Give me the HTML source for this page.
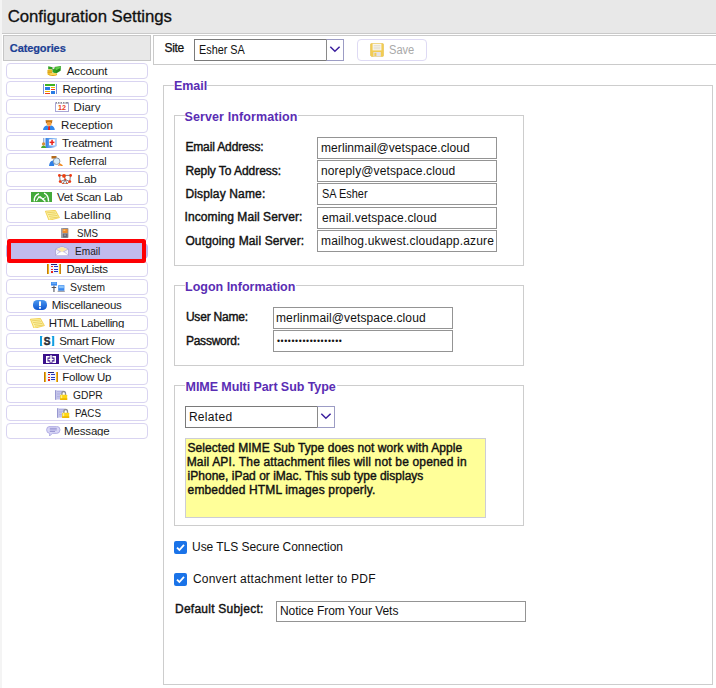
<!DOCTYPE html>
<html><head><meta charset="utf-8"><title>Configuration Settings</title>
<style>
*{box-sizing:border-box;margin:0;padding:0}
html,body{width:716px;height:688px;overflow:hidden;background:#fff;font-family:"Liberation Sans",sans-serif;color:#111}
body{position:relative}
.a{position:absolute}
.t{position:absolute;white-space:nowrap}
#hdr{left:2px;top:0;width:714px;height:34px;background:#e8e8e8;border-bottom:1px solid #c9c9c9}
#strip{left:0;top:0;width:2px;height:688px;background:#f4f4f4}
#cat{left:3px;top:35px;width:148px;height:26px;background:#e8e8e8;border:1px solid #c6c6c6}
.btn{position:absolute;left:6px;width:142px;height:16px;border:1px solid #d9d4f1;border-radius:4px;background:#fff}
.btn.sel{background:#c1baec;border-color:#bdb8ea}
.clip{position:absolute;left:0;top:0;width:140px;height:12px;overflow:hidden}
.clip svg{position:absolute;display:block}
.bt{position:absolute;white-space:nowrap;font-size:11.5px;line-height:14px;color:#1c1c1c}
#red{left:7px;top:239px;width:139px;height:24px;border:4px solid #fd0004;border-radius:2.5px}
.inp{position:absolute;border:1px solid #949494;background:#fff;overflow:hidden}
.fs{position:absolute;border:1px solid #cdcdcd}
.lgbg{position:absolute;background:#fff;height:3px}
.cb{position:absolute;width:13px;height:13px;background:#1a73e8;border-radius:2px}
.cb svg{position:absolute;left:0;top:0}
</style></head><body>
<div id="strip" class="a"></div>
<div id="hdr" class="a"></div>
<div id="cat" class="a"></div>
<div class="a" style="left:153px;top:35px;width:570px;height:30px;border:1px solid #cacaca;background:#fff"></div>
<div id="title" class="t" style="left:7.70px;top:7.48px;font-size:16.8px;line-height:20px;font-weight:normal;color:#111;letter-spacing:-0.043px;-webkit-text-stroke:0.3px #111;">Configuration Settings</div>
<div id="cat_t" class="t" style="left:9.80px;top:42.49px;font-size:11px;line-height:13px;font-weight:bold;color:#1c3f94;letter-spacing:-0.100px;-webkit-text-stroke:0.2px #1c3f94;">Categories</div>
<div class="btn" style="top:63px"><div class="clip"><svg style="left:40.0px;top:2.0px" width="14" height="10" viewBox="0 0 14 10"><path d="M1.2 0.3 L5.6 1.2 L13.9 0 L13.6 4.8 L9.2 7.4 L5.4 6.2 L5.4 3.4 L1.2 3.2Z" fill="#2fa022"/><path d="M8 1.6 L13.2 0.8 L13 2.2 L9 4.2Z" fill="#5fcc46"/><path d="M8.8 5.2 L13.4 2.8 M9 6.4 L13.4 3.9" stroke="#1a741a" stroke-width="0.6"/><path d="M5.4 1.2 L7.8 0.9 L7.2 3 L5.6 3.2Z" fill="#f2dcee"/><rect x="0.5" y="3.4" width="4.7" height="5.6" rx="1" fill="#f2c230"/><path d="M0.5 5 H5.2 M0.5 6.6 H5.2" stroke="#c48c0c" stroke-width="0.6"/><ellipse cx="5.8" cy="8.6" rx="4.4" ry="1.4" fill="#e0a40e"/><ellipse cx="6" cy="8" rx="3.7" ry="1" fill="#fad85a"/></svg><span id="b0" class="bt" style="left:59.80px;top:-0.4px;letter-spacing:-0.150px">Account</span></div></div>
<div class="btn" style="top:81px"><div class="clip"><svg style="left:36.0px;top:2.0px" shape-rendering="crispEdges" width="15" height="10" viewBox="0 0 15 10"><rect x="0.2" y="0" width="0.9" height="10" fill="#7a8fd8"/><rect x="13.4" y="0" width="0.9" height="10" fill="#7a8fd8"/><rect x="2" y="0" width="10.2" height="1.7" fill="#3fb224"/><rect x="2" y="3.2" width="4.8" height="3.2" fill="#2a7be4"/><rect x="8" y="3" width="4.2" height="1" fill="#f4b800"/><rect x="8" y="5" width="4.2" height="1.1" fill="#ee3a1e"/><rect x="2" y="7.2" width="4.8" height="1" fill="#f4b800"/><rect x="2" y="9" width="4.8" height="1" fill="#ee3a1e"/><rect x="8" y="7.2" width="4.2" height="2.8" fill="#2a7be4"/></svg><span id="b1" class="bt" style="left:55.40px;top:-0.4px;letter-spacing:0.000px">Reporting</span></div></div>
<div class="btn" style="top:99px"><div class="clip"><svg style="left:48.0px;top:2.0px" width="14" height="10" viewBox="0 0 14 10"><rect x="0.5" y="0.8" width="13" height="8.7" fill="#fff" stroke="#a9a6d6" stroke-width="1"/><rect x="1" y="0" width="12" height="1.6" fill="#8c8c98"/><rect x="2" y="0" width="1" height="1.6" fill="#fff"/><rect x="4.5" y="0" width="1" height="1.6" fill="#fff"/><rect x="7" y="0" width="1" height="1.6" fill="#fff"/><rect x="9.5" y="0" width="1" height="1.6" fill="#fff"/><text x="7" y="8.2" font-family="Liberation Sans, sans-serif" font-size="7.5" font-weight="bold" fill="#e8401c" text-anchor="middle" textLength="8" lengthAdjust="spacingAndGlyphs">12</text></svg><span id="b2" class="bt" style="left:66.60px;top:-0.4px;letter-spacing:0.000px">Diary</span></div></div>
<div class="btn" style="top:117px"><div class="clip"><svg style="left:36.0px;top:2.0px" width="14" height="10" viewBox="0 0 14 10"><path d="M2.6 0 H9.4 L9 3.2 H3Z" fill="#b86a18"/><path d="M3 0 H9 V1.2 H3Z" fill="#d8902c"/><rect x="3.8" y="2" width="4.6" height="3.8" rx="1.2" fill="#f2a040"/><path d="M0 10 Q0.4 6 3.8 5.4 L6 7 L8.2 5.4 Q11.4 6 11.8 10Z" fill="#2f86ec"/><path d="M5.4 6 H6.8 L7.2 10 H5Z" fill="#e8201c"/></svg><span id="b3" class="bt" style="left:54.10px;top:-0.4px;letter-spacing:0.000px">Reception</span></div></div>
<div class="btn" style="top:135px"><div class="clip"><svg style="left:34.0px;top:2.0px" width="16" height="10" viewBox="0 0 16 10"><defs><linearGradient id="tg" x1="0" x2="1"><stop offset="0" stop-color="#2f7fe6"/><stop offset="1" stop-color="#b8d6fa"/></linearGradient></defs><rect x="2" y="0" width="1.4" height="6" fill="#9ab0d8"/><path d="M4.5 0 H16 V8 Q13 10 10 10 H4.5Z" fill="url(#tg)"/><rect x="8" y="1.2" width="6" height="6.4" rx="0.8" fill="#fff"/><rect x="10.3" y="1.8" width="1.5" height="5.2" fill="#e8241c"/><rect x="8.6" y="3.6" width="4.8" height="1.5" fill="#e8241c"/><circle cx="2.6" cy="6" r="1.7" fill="#d89038"/><path d="M0 10 Q0.3 7.4 2.6 7.4 Q5 7.4 5.3 10Z" fill="#48a82c"/></svg><span id="b4" class="bt" style="left:55.00px;top:-0.4px;letter-spacing:-0.225px">Treatment</span></div></div>
<div class="btn" style="top:153px"><div class="clip"><svg style="left:42.2px;top:2.0px" width="14" height="10" viewBox="0 0 14 10"><path d="M2.5 0 H7.5 V2.6 H2.5Z" fill="#b5691c"/><path d="M0 10 Q0.5 5 4 4.6 L6 4.6 L5 10Z" fill="#2f7fe6"/><circle cx="7.6" cy="5.2" r="3.3" fill="#d8ecfa" stroke="#8a98a8" stroke-width="1"/><path d="M10 7.6 L13.4 10" stroke="#f08a1c" stroke-width="1.6"/><path d="M9.4 9.2 L12 10 H9Z" fill="#e03a1c"/></svg><span id="b5" class="bt" style="left:62.10px;top:-0.4px;letter-spacing:0.000px;transform:scaleX(0.9216);transform-origin:0 50%">Referral</span></div></div>
<div class="btn" style="top:171px"><div class="clip"><svg style="left:51.4px;top:1.6px" width="14" height="11" viewBox="0 0 14 11"><path d="M1.4 1.4 H12.6 M1.6 1.4 L2.2 7.6 M12.4 1.4 L11.8 7.6 M2.2 7.6 L5 9.8 H9 L11.8 7.6 M6 1.6 L7.2 5.6 M7.2 5.6 L5 9.8 M7.2 5.6 L9 9.8 M2.2 7.6 L7.2 5.6 L11.8 7.6" stroke="#7c7c86" stroke-width="1" fill="none"/><circle cx="1.4" cy="1.5" r="1.4" fill="#ee3a14"/><circle cx="12.6" cy="1.5" r="1.4" fill="#ee3a14"/><circle cx="6" cy="1.9" r="1.9" fill="#f0400f"/><circle cx="2.2" cy="7.6" r="1.4" fill="#ee3a14"/><circle cx="11.8" cy="7.6" r="1.4" fill="#ee3a14"/><circle cx="7.3" cy="5.6" r="1" fill="#ee3a14"/><circle cx="5" cy="9.7" r="1" fill="#ee5a2a"/><circle cx="9" cy="9.7" r="1" fill="#ee5a2a"/></svg><span id="b6" class="bt" style="left:70.50px;top:-0.4px;letter-spacing:0.000px">Lab</span></div></div>
<div class="btn" style="top:189px"><div class="clip"><svg style="left:24.2px;top:2.0px" width="21" height="10" viewBox="0 0 21 10"><rect width="21" height="10" fill="#44aa3a"/><path d="M3.4 9.4 Q2.6 3.6 8 1.6" stroke="#fff" stroke-width="1.3" fill="none"/><path d="M5.4 9 L8 4.6 L9.6 6.4" stroke="#fff" stroke-width="1.1" fill="none"/><path d="M8.8 4.4 L14.4 9.6" stroke="#fff" stroke-width="1.4" fill="none"/><path d="M13 1.2 Q17.4 2.6 17.6 9.4" stroke="#fff" stroke-width="1.4" fill="none"/><path d="M11 6.8 Q13.6 7 14.8 4.6" stroke="#fff" stroke-width="1" fill="none"/></svg><span id="b7" class="bt" style="left:49.90px;top:-0.4px;letter-spacing:-0.245px">Vet Scan Lab</span></div></div>
<div class="btn" style="top:207px"><div class="clip"><svg style="left:37.5px;top:1.6px" width="15" height="11" viewBox="0 0 15 11"><path d="M0.4 1.2 L10.4 0.4 L14.4 7.6 L4 10.4Z" fill="#fcf2a4" stroke="#f0c83c" stroke-width="0.8"/><path d="M2 2.8 L10.4 2 M3 4.6 L11.4 3.7 M4 6.4 L12.4 5.4 M5 8.2 L13 7.1" stroke="#e4c44c" stroke-width="0.7" fill="none"/></svg><span id="b8" class="bt" style="left:57.00px;top:-0.4px;letter-spacing:0.112px">Labelling</span></div></div>
<div class="btn" style="top:225px"><div class="clip"><svg style="left:53.6px;top:2.3px" width="8" height="10" viewBox="0 0 8 10"><rect x="0" y="0" width="7.4" height="10" rx="0.8" fill="#8e8e96"/><rect x="0.6" y="0.4" width="1" height="9.2" fill="#b8b8c2"/><rect x="1.6" y="1" width="5" height="4" fill="#f08c2a"/><rect x="2.4" y="1.6" width="2" height="1.4" fill="#f8c070"/><rect x="1.8" y="6" width="4.6" height="3.2" fill="#6a6a74"/><rect x="3" y="6.6" width="2" height="1" fill="#a8a8b2"/></svg><span id="b9" class="bt" style="left:69.90px;top:-0.4px;letter-spacing:0.000px;transform:scaleX(0.8443);transform-origin:0 50%">SMS</span></div></div>
<div class="btn sel" style="top:243px"><div class="clip"><svg style="left:48.2px;top:2.3px" width="14" height="10" viewBox="0 0 14 10"><path d="M0.5 3 L7 0.3 L13.5 3 V9.6 H0.5Z" fill="#f4f2fc" stroke="#a8a2d4" stroke-width="0.8"/><path d="M1.2 3.2 L7 1 L12.8 3.2 L7 6.2Z" fill="#fbe9a6"/><path d="M0.5 3 L7 6.6 L13.5 3 M0.5 9.6 L5 5.6 M13.5 9.6 L9 5.6" stroke="#b4aedc" stroke-width="0.8" fill="none"/><path d="M0.9 9.3 L7 5.4 L13.1 9.3Z" fill="#fff"/></svg><span id="b10" class="bt" style="left:67.60px;top:-0.4px;letter-spacing:0.000px;transform:scaleX(0.8801);transform-origin:0 50%">Email</span></div></div>
<div class="btn" style="top:261px"><div class="clip"><svg style="left:39.5px;top:2.3px" shape-rendering="crispEdges" width="15" height="10" viewBox="0 0 15 10"><defs><linearGradient id="dg1" x1="0" x2="1"><stop offset="0" stop-color="#a85a00"/><stop offset="1" stop-color="#ffc81e"/></linearGradient><linearGradient id="dg2" x1="0" x2="1"><stop offset="0" stop-color="#ffc81e"/><stop offset="1" stop-color="#a85a00"/></linearGradient></defs><rect x="1.8" y="0" width="10.6" height="10" fill="#f0f5ff"/><rect x="0" y="0" width="1.8" height="10" fill="url(#dg1)"/><rect x="12.4" y="0" width="1.8" height="10" fill="url(#dg2)"/><rect x="4.4" y="0" width="6" height="0.9" fill="#20287c"/><rect x="4.4" y="2" width="1.7" height="1.4" fill="#e8241c"/><rect x="4.4" y="4.6" width="1.7" height="1.4" fill="#e8241c"/><rect x="4.4" y="7.2" width="1.7" height="1.4" fill="#e8241c"/><rect x="7.2" y="2.1" width="4" height="1.1" fill="#2438c0"/><rect x="7.2" y="4.7" width="4" height="1.1" fill="#2438c0"/><rect x="7.2" y="7.3" width="4" height="1.1" fill="#2438c0"/></svg><span id="b11" class="bt" style="left:59.50px;top:-0.4px;letter-spacing:-0.386px">DayLists</span></div></div>
<div class="btn" style="top:279px"><div class="clip"><svg style="left:43.6px;top:1.8px" width="14" height="10" viewBox="0 0 14 10"><rect x="0" y="0" width="6" height="3.6" fill="#3a8af0"/><rect x="0.6" y="0.5" width="4.8" height="1.2" fill="#7cb8f8"/><rect x="2.4" y="3.6" width="1.1" height="6.4" fill="#54545e"/><rect x="0.6" y="5" width="4.6" height="1" fill="#54545e"/><rect x="7.2" y="3.2" width="6.2" height="5.6" fill="#3a8af0"/><rect x="7.8" y="3.8" width="5" height="2.4" fill="#8cc4fa"/><rect x="6.6" y="8.8" width="7.2" height="1.1" fill="#9a9aa4"/></svg><span id="b12" class="bt" style="left:63.00px;top:-0.4px;letter-spacing:0.000px;transform:scaleX(0.9156);transform-origin:0 50%">System</span></div></div>
<div class="btn" style="top:297px"><div class="clip"><svg style="left:25.9px;top:1.8px" width="14" height="10" viewBox="0 0 14 10"><defs><linearGradient id="mg" x1="0" y1="0" x2="0" y2="1"><stop offset="0" stop-color="#4a98f0"/><stop offset="1" stop-color="#0f56d0"/></linearGradient></defs><rect x="0" y="0" width="14" height="10" rx="4.6" fill="url(#mg)"/><rect x="6" y="1.3" width="2" height="4.6" rx="0.5" fill="#fff"/><rect x="6" y="6.8" width="2" height="1.9" rx="0.5" fill="#fff"/></svg><span id="b13" class="bt" style="left:44.70px;top:-0.4px;letter-spacing:-0.225px">Miscellaneous</span></div></div>
<div class="btn" style="top:315px"><div class="clip"><svg style="left:22.6px;top:1.6px" width="15" height="11" viewBox="0 0 15 11"><path d="M0.4 1.2 L10.4 0.4 L14.4 7.6 L4 10.4Z" fill="#fcf2a4" stroke="#f0c83c" stroke-width="0.8"/><path d="M2 2.8 L10.4 2 M3 4.6 L11.4 3.7 M4 6.4 L12.4 5.4 M5 8.2 L13 7.1" stroke="#e4c44c" stroke-width="0.7" fill="none"/></svg><span id="b14" class="bt" style="left:41.70px;top:-0.4px;letter-spacing:-0.346px">HTML Labelling</span></div></div>
<div class="btn" style="top:333px"><div class="clip"><svg style="left:33.0px;top:2.3px" width="15" height="10" viewBox="0 0 15 10"><path d="M0 0 H2.4 V0.7 H2 V9.3 H2.4 V10 H0Z" fill="#129ee2"/><path d="M14.2 0 H11.8 V0.7 H12.2 V9.3 H11.8 V10 H14.2Z" fill="#129ee2"/><text x="7.1" y="8.6" font-family="Liberation Sans, sans-serif" font-size="10" font-weight="bold" fill="#2e2e36" stroke="#2e2e36" stroke-width="0.5" text-anchor="middle">S</text></svg><span id="b15" class="bt" style="left:52.20px;top:-0.4px;letter-spacing:-0.300px">Smart Flow</span></div></div>
<div class="btn" style="top:351px"><div class="clip"><svg style="left:36.0px;top:2.0px" width="16" height="10" viewBox="0 0 16 10"><rect width="16" height="10" fill="#3a108c"/><path d="M3 2 h3.6 v1.5 h-2.1 v4 h2.1 v1.5 h-3.6Z M13 2 h-3.6 v1.5 h2.1 v4 h-2.1 v1.5 h3.6Z M5.4 4.7 h5.2 v1.6 h-5.2Z M7.2 1.2 h1.6 v7.4 h-1.6Z" fill="#fff"/></svg><span id="b16" class="bt" style="left:56.10px;top:-0.4px;letter-spacing:-0.129px">VetCheck</span></div></div>
<div class="btn" style="top:369px"><div class="clip"><svg style="left:36.6px;top:2.3px" shape-rendering="crispEdges" width="15" height="10" viewBox="0 0 15 10"><defs><linearGradient id="dg1" x1="0" x2="1"><stop offset="0" stop-color="#a85a00"/><stop offset="1" stop-color="#ffc81e"/></linearGradient><linearGradient id="dg2" x1="0" x2="1"><stop offset="0" stop-color="#ffc81e"/><stop offset="1" stop-color="#a85a00"/></linearGradient></defs><rect x="1.8" y="0" width="10.6" height="10" fill="#f0f5ff"/><rect x="0" y="0" width="1.8" height="10" fill="url(#dg1)"/><rect x="12.4" y="0" width="1.8" height="10" fill="url(#dg2)"/><rect x="4.4" y="0" width="6" height="0.9" fill="#20287c"/><rect x="4.4" y="2" width="1.7" height="1.4" fill="#e8241c"/><rect x="4.4" y="4.6" width="1.7" height="1.4" fill="#e8241c"/><rect x="4.4" y="7.2" width="1.7" height="1.4" fill="#e8241c"/><rect x="7.2" y="2.1" width="4" height="1.1" fill="#2438c0"/><rect x="7.2" y="4.7" width="4" height="1.1" fill="#2438c0"/><rect x="7.2" y="7.3" width="4" height="1.1" fill="#2438c0"/></svg><span id="b17" class="bt" style="left:55.20px;top:-0.4px;letter-spacing:-0.225px">Follow Up</span></div></div>
<div class="btn" style="top:387px"><div class="clip"><svg style="left:47.9px;top:2.1px" width="13" height="10" viewBox="0 0 13 10"><path d="M0.4 0.3 H7.6 L9.4 1.8 V9.8 H0.4Z" fill="#d4d4f2"/><rect x="0.2" y="0.2" width="1" height="9.6" fill="#8686c6"/><path d="M2 1.6 H7 M2 3.2 H6 M2 4.8 H5 M2 6.4 H5 M2 8 H5" stroke="#a4a4dc" stroke-width="0.8"/><path d="M6.9 5.2 V3.6 Q6.9 1.5 8.7 1.5 Q10.5 1.5 10.5 3.6 V5.2" stroke="#8c8c92" stroke-width="1.3" fill="#fff"/><rect x="5.2" y="4.8" width="7" height="5.2" rx="0.5" fill="#fdd614"/><rect x="5.2" y="8.2" width="7" height="1.8" fill="#eeb800"/><rect x="6" y="5.2" width="1.2" height="3" fill="#fff08a"/></svg><span id="b18" class="bt" style="left:65.60px;top:-0.4px;letter-spacing:0.000px;transform:scaleX(0.8948);transform-origin:0 50%">GDPR</span></div></div>
<div class="btn" style="top:405px"><div class="clip"><svg style="left:50.2px;top:1.8px" width="13" height="10" viewBox="0 0 13 10"><path d="M0.4 0.3 H7.6 L9.4 1.8 V9.8 H0.4Z" fill="#d4d4f2"/><rect x="0.2" y="0.2" width="1" height="9.6" fill="#8686c6"/><path d="M2 1.6 H7 M2 3.2 H6 M2 4.8 H5 M2 6.4 H5 M2 8 H5" stroke="#a4a4dc" stroke-width="0.8"/><path d="M6.9 5.2 V3.6 Q6.9 1.5 8.7 1.5 Q10.5 1.5 10.5 3.6 V5.2" stroke="#8c8c92" stroke-width="1.3" fill="#fff"/><rect x="5.2" y="4.8" width="7" height="5.2" rx="0.5" fill="#fdd614"/><rect x="5.2" y="8.2" width="7" height="1.8" fill="#eeb800"/><rect x="6" y="5.2" width="1.2" height="3" fill="#fff08a"/></svg><span id="b19" class="bt" style="left:67.60px;top:-0.4px;letter-spacing:0.000px;transform:scaleX(0.8538);transform-origin:0 50%">PACS</span></div></div>
<div class="btn" style="top:423px"><div class="clip"><svg style="left:38.8px;top:1.8px" width="15" height="11" viewBox="0 0 15 11"><path d="M4 0.4 H10.6 Q14 0.4 14 3.8 Q14 7.4 10.6 7.4 H6.4 L3.4 10.2 L3.8 7.4 Q0.6 7.2 0.6 3.8 Q0.6 0.4 4 0.4Z" fill="#d8d6f6" stroke="#a6a2e0" stroke-width="0.8"/><path d="M3.8 2.3 H10.8 M3.8 3.9 H10.8 M3.8 5.5 H9" stroke="#8c88cc" stroke-width="0.8"/></svg><span id="b20" class="bt" style="left:57.00px;top:-0.4px;letter-spacing:-0.150px">Message</span></div></div>
<div id="site" class="t" style="left:164.50px;top:41.04px;font-size:12px;line-height:14px;font-weight:normal;color:#111;letter-spacing:-0.300px;-webkit-text-stroke:0.25px #111;">Site</div>
<div class="inp" style="left:194px;top:39px;width:150px;height:22px;border-color:#7a7a7a"></div>
<div class="a" style="left:326px;top:39px;width:18px;height:22px;border:1px solid #9c9cc4;border-left-color:#8a8a8a;background:#fff"></div>
<svg class="a" style="left:329px;top:45px" width="12" height="8" viewBox="0 0 12 8"><path d="M1.3 1.7 L5.9 6.2 L10.6 1.7" fill="none" stroke="#3b1f9e" stroke-width="1.5"/></svg>
<div id="esher" class="t" style="left:198.70px;top:42.74px;font-size:12px;line-height:14px;font-weight:normal;color:#111;letter-spacing:0.000px;transform:scaleX(0.9039);transform-origin:0 50%;">Esher SA</div>
<div class="a" style="left:357px;top:39px;width:70px;height:22px;border:1px solid #dedaf4;border-radius:4px"></div>
<svg class="a" style="left:370px;top:43px" width="14" height="14" viewBox="0 0 14 14"><path d="M0.5 1.5 Q0.5 0.5 1.5 0.5 H12.5 Q13.5 0.5 13.5 1.5 V12.5 Q13.5 13.5 12.5 13.5 H1.5 L0.5 12.5Z" fill="#f2cc52" stroke="#e6c04a" stroke-width="0.6"/><rect x="2.6" y="0.8" width="8.8" height="6.6" fill="#fbf7ea"/><path d="M3.6 2.6 H10.4 M3.6 4.2 H10.4 M3.6 5.8 H10.4" stroke="#d8d4c8" stroke-width="0.7"/><rect x="3.4" y="9" width="7.4" height="4.5" fill="#e4e2e6"/><rect x="4.4" y="9.8" width="2" height="3.2" fill="#f2cc52"/></svg>
<div id="save" class="t" style="left:389.30px;top:43.34px;font-size:12px;line-height:14px;font-weight:normal;color:#a9a9a9;letter-spacing:0.000px;transform:scaleX(0.9246);transform-origin:0 50%;">Save</div>
<div class="fs" style="left:163px;top:85px;width:550px;height:600px"></div>
<div class="fs" style="left:174px;top:115px;width:350px;height:151px"></div>
<div class="fs" style="left:174px;top:285px;width:350px;height:81px"></div>
<div class="fs" style="left:174px;top:385px;width:350px;height:141px"></div>
<div class="lgbg" style="left:174px;top:84px;width:33px"></div>
<div class="lgbg" style="left:185px;top:114px;width:113px"></div>
<div class="lgbg" style="left:185px;top:284px;width:111px"></div>
<div class="lgbg" style="left:185px;top:384px;width:152px"></div>
<div id="lg_email" class="t" style="left:173.90px;top:78.87px;font-size:12.5px;line-height:15px;font-weight:bold;color:#5a2db4;letter-spacing:-0.000px;">Email</div>
<div id="lg_server" class="t" style="left:184.50px;top:110.37px;font-size:12.5px;line-height:15px;font-weight:bold;color:#5a2db4;letter-spacing:0.106px;">Server Information</div>
<div id="lg_logon" class="t" style="left:185.00px;top:280.27px;font-size:12.5px;line-height:15px;font-weight:bold;color:#5a2db4;letter-spacing:0.000px;">Logon Information</div>
<div id="lg_mime" class="t" style="left:185.60px;top:379.57px;font-size:12.5px;line-height:15px;font-weight:bold;color:#5a2db4;letter-spacing:-0.078px;">MIME Multi Part Sub Type</div>
<div id="l_email" class="t" style="left:185.40px;top:140.24px;font-size:12px;line-height:14px;font-weight:normal;color:#111;letter-spacing:-0.138px;-webkit-text-stroke:0.4px #111;">Email Address:</div>
<div id="l_reply" class="t" style="left:185.40px;top:163.74px;font-size:12px;line-height:14px;font-weight:normal;color:#111;letter-spacing:-0.056px;-webkit-text-stroke:0.4px #111;">Reply To Address:</div>
<div id="l_display" class="t" style="left:185.40px;top:186.84px;font-size:12px;line-height:14px;font-weight:normal;color:#111;letter-spacing:0.150px;-webkit-text-stroke:0.4px #111;">Display Name:</div>
<div id="l_incoming" class="t" style="left:184.50px;top:210.14px;font-size:12px;line-height:14px;font-weight:normal;color:#111;letter-spacing:0.090px;-webkit-text-stroke:0.4px #111;">Incoming Mail Server:</div>
<div id="l_outgoing" class="t" style="left:185.40px;top:233.84px;font-size:12px;line-height:14px;font-weight:normal;color:#111;letter-spacing:0.135px;-webkit-text-stroke:0.4px #111;">Outgoing Mail Server:</div>
<div class="inp" style="left:317px;top:137px;width:180px;height:22px"></div>
<div class="inp" style="left:317px;top:160px;width:180px;height:22px"></div>
<div class="inp" style="left:317px;top:183px;width:180px;height:22px"></div>
<div class="inp" style="left:317px;top:207px;width:180px;height:22px"></div>
<div class="inp" style="left:317px;top:230px;width:180px;height:22px"></div>
<div id="i_email" class="t" style="left:321.00px;top:141.14px;font-size:12px;line-height:14px;font-weight:normal;color:#111;letter-spacing:0.075px;">merlinmail@vetspace.cloud</div>
<div id="i_reply" class="t" style="left:321.00px;top:163.84px;font-size:12px;line-height:14px;font-weight:normal;color:#111;letter-spacing:0.129px;">noreply@vetspace.cloud</div>
<div id="i_display" class="t" style="left:321.90px;top:187.34px;font-size:12px;line-height:14px;font-weight:normal;color:#111;letter-spacing:0.000px;transform:scaleX(0.9111);transform-origin:0 50%;">SA Esher</div>
<div id="i_incoming" class="t" style="left:321.90px;top:210.84px;font-size:12px;line-height:14px;font-weight:normal;color:#111;letter-spacing:0.142px;">email.vetspace.cloud</div>
<div class="a" style="left:318px;top:231px;width:176px;height:20px;overflow:hidden"><div id="i_outgoing" class="t" style="left:3.00px;top:3.24px;font-size:12px;line-height:14px;font-weight:normal;color:#111;letter-spacing:0.000px;letter-spacing:0.17px;">mailhog.ukwest.cloudapp.azure.com</div>
</div>
<div id="l_user" class="t" style="left:185.90px;top:309.94px;font-size:12px;line-height:14px;font-weight:normal;color:#111;letter-spacing:-0.200px;-webkit-text-stroke:0.4px #111;">User Name:</div>
<div id="l_pass" class="t" style="left:185.90px;top:333.64px;font-size:12px;line-height:14px;font-weight:normal;color:#111;letter-spacing:-0.225px;-webkit-text-stroke:0.4px #111;">Password:</div>
<div class="inp" style="left:273px;top:307px;width:180px;height:22px"></div>
<div class="inp" style="left:273px;top:330px;width:180px;height:22px"></div>
<div id="i_user" class="t" style="left:276.00px;top:310.54px;font-size:12px;line-height:14px;font-weight:normal;color:#111;letter-spacing:0.113px;">merlinmail@vetspace.cloud</div>
<div id="i_pass" class="t" style="left:276.90px;top:335.62px;font-size:8.6px;line-height:10px;font-weight:normal;color:#111;letter-spacing:0.635px;">••••••••••••••••••</div>
<div class="inp" style="left:185px;top:406px;width:150px;height:22px;border-color:#7a7a7a"></div>
<div class="a" style="left:317px;top:406px;width:18px;height:22px;border:1px solid #9c9cc4;border-left-color:#8a8a8a;background:#fff"></div>
<svg class="a" style="left:320px;top:412px" width="12" height="8" viewBox="0 0 12 8"><path d="M1.3 1.7 L5.9 6.2 L10.6 1.7" fill="none" stroke="#3b1f9e" stroke-width="1.5"/></svg>
<div id="related" class="t" style="left:188.90px;top:409.84px;font-size:12px;line-height:14px;font-weight:normal;color:#111;letter-spacing:0.300px;">Related</div>
<div class="a" style="left:185px;top:438px;width:301px;height:80px;background:#ffff99;border:1px solid #cdcdd6"></div>
<div id="y0" class="t" style="left:187.40px;top:440.54px;font-size:12px;line-height:14px;font-weight:normal;color:#111;letter-spacing:0.078px;-webkit-text-stroke:0.4px #111;">Selected MIME Sub Type does not work with Apple</div>
<div id="y1" class="t" style="left:186.68px;top:454.54px;font-size:12px;line-height:14px;font-weight:normal;color:#111;letter-spacing:0.169px;-webkit-text-stroke:0.4px #111;">Mail API. The attachment files will not be opened in</div>
<div id="y2" class="t" style="left:187.58px;top:468.54px;font-size:12px;line-height:14px;font-weight:normal;color:#111;letter-spacing:0.013px;-webkit-text-stroke:0.4px #111;">iPhone, iPad or iMac. This sub type displays</div>
<div id="y3" class="t" style="left:187.58px;top:482.54px;font-size:12px;line-height:14px;font-weight:normal;color:#111;letter-spacing:0.149px;-webkit-text-stroke:0.4px #111;">embedded HTML images properly.</div>
<div class="cb" style="left:174px;top:541px"><svg width="13" height="13" viewBox="0 0 13 13"><path d="M3 6.6 L5.4 9 L10 3.8" fill="none" stroke="#fff" stroke-width="1.8"/></svg></div>
<div class="cb" style="left:174px;top:573px"><svg width="13" height="13" viewBox="0 0 13 13"><path d="M3 6.6 L5.4 9 L10 3.8" fill="none" stroke="#fff" stroke-width="1.8"/></svg></div>
<div id="tls" class="t" style="left:192.00px;top:539.94px;font-size:12px;line-height:14px;font-weight:normal;color:#111;letter-spacing:-0.037px;">Use TLS Secure Connection</div>
<div id="conv" class="t" style="left:192.90px;top:572.24px;font-size:12px;line-height:14px;font-weight:normal;color:#111;letter-spacing:0.232px;">Convert attachment letter to PDF</div>
<div id="l_default" class="t" style="left:175.00px;top:602.04px;font-size:12px;line-height:14px;font-weight:normal;color:#111;letter-spacing:0.240px;-webkit-text-stroke:0.4px #111;">Default Subject:</div>
<div class="inp" style="left:276px;top:601px;width:250px;height:21px"></div>
<div id="i_default" class="t" style="left:279.90px;top:604.34px;font-size:12px;line-height:14px;font-weight:normal;color:#111;letter-spacing:-0.045px;">Notice From Your Vets</div>
<div id="red" class="a"></div>
</body></html>
